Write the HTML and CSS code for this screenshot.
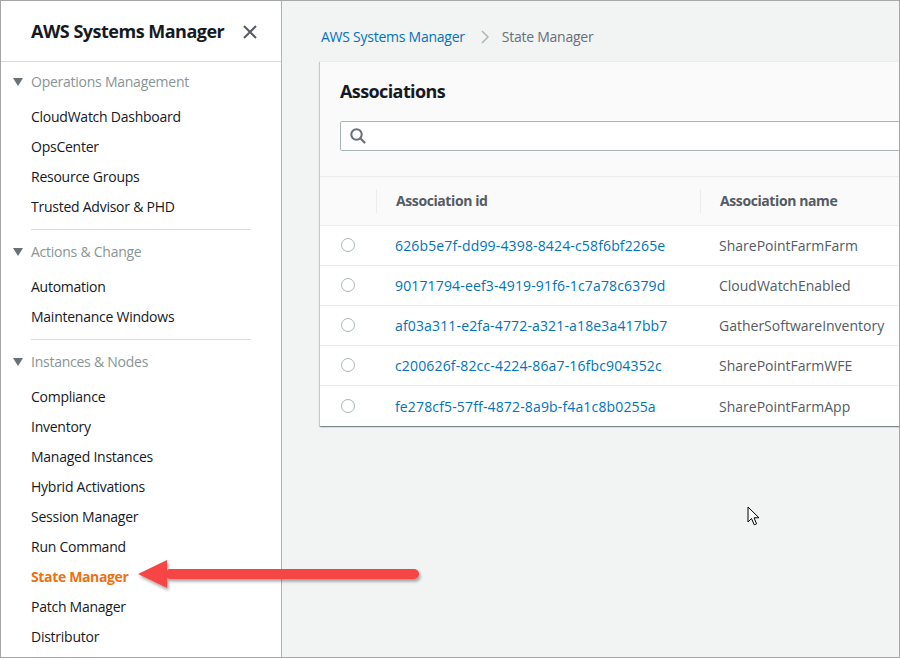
FILE: index.html
```html
<!DOCTYPE html>
<html>
<head>
<meta charset="utf-8">
<link rel="stylesheet" href="styles.css">
</head>
<body>
<div class="frame">
  <aside class="sidebar">
    <div class="side-head">
      <span class="side-title">AWS Systems Manager</span>
      <svg class="close" width="14" height="14" viewBox="0 0 14 14"><path d="M1 1L13 13M13 1L1 13" stroke="#545b64" stroke-width="2" fill="none"/></svg>
    </div>
    <nav class="nav">
      <div class="sec-head"><span class="tri"></span>Operations Management</div>
      <ul class="items">
        <li>CloudWatch Dashboard</li>
        <li>OpsCenter</li>
        <li>Resource Groups</li>
        <li>Trusted Advisor &amp; PHD</li>
      </ul>
      <hr class="divider">
      <div class="sec-head"><span class="tri"></span>Actions &amp; Change</div>
      <ul class="items">
        <li>Automation</li>
        <li>Maintenance Windows</li>
      </ul>
      <hr class="divider">
      <div class="sec-head"><span class="tri"></span>Instances &amp; Nodes</div>
      <ul class="items">
        <li>Compliance</li>
        <li>Inventory</li>
        <li>Managed Instances</li>
        <li>Hybrid Activations</li>
        <li>Session Manager</li>
        <li>Run Command</li>
        <li class="active">State Manager</li>
        <li>Patch Manager</li>
        <li>Distributor</li>
      </ul>
    </nav>
  </aside>
  <main class="main">
    <div class="crumbs">
      <span class="crumb-link">AWS Systems Manager</span>
      <svg class="chev" width="8" height="14" viewBox="0 0 8 14"><path d="M1 1L7 7L1 13" stroke="#aab7b8" stroke-width="1.5" fill="none"/></svg>
      <span class="crumb-cur">State Manager</span>
    </div>
    <section class="card">
      <div class="card-head">
        <h2 class="card-title">Associations</h2>
        <div class="search">
          <svg width="18" height="18" viewBox="0 0 18 18"><circle cx="7.5" cy="7.5" r="5.2" stroke="#687078" stroke-width="2" fill="none"/><path d="M11.3 11.3L15.5 15.5" stroke="#687078" stroke-width="2.2" stroke-linecap="round"/></svg>
        </div>
      </div>
      <div class="tbl">
        <div class="row head">
          <div class="c-sel"></div>
          <div class="c-id"><span class="th-in">Association id</span></div>
          <div class="c-name"><span class="th-in">Association name</span></div>
        </div>
        <div class="row"><div class="c-sel"><span class="radio"></span></div><div class="c-id"><a>626b5e7f-dd99-4398-8424-c58f6bf2265e</a></div><div class="c-name">SharePointFarmFarm</div></div>
        <div class="row"><div class="c-sel"><span class="radio"></span></div><div class="c-id"><a>90171794-eef3-4919-91f6-1c7a78c6379d</a></div><div class="c-name">CloudWatchEnabled</div></div>
        <div class="row"><div class="c-sel"><span class="radio"></span></div><div class="c-id"><a>af03a311-e2fa-4772-a321-a18e3a417bb7</a></div><div class="c-name">GatherSoftwareInventory</div></div>
        <div class="row"><div class="c-sel"><span class="radio"></span></div><div class="c-id"><a>c200626f-82cc-4224-86a7-16fbc904352c</a></div><div class="c-name">SharePointFarmWFE</div></div>
        <div class="row last"><div class="c-sel"><span class="radio"></span></div><div class="c-id"><a>fe278cf5-57ff-4872-8a9b-f4a1c8b0255a</a></div><div class="c-name">SharePointFarmApp</div></div>
      </div>
    </section>
  </main>
  <svg class="arrow" width="300" height="44" viewBox="0 0 300 44">
    <defs>
      <filter id="sh" x="-10%" y="-40%" width="120%" height="200%">
        <feDropShadow dx="1.5" dy="2.5" stdDeviation="1.8" flood-color="#000" flood-opacity="0.35"/>
      </filter>
    </defs>
    <g filter="url(#sh)" fill="#f64545">
      <path d="M6 22L35 8L35 36Z"/>
      <rect x="33" y="17" width="254" height="10" rx="5"/>
    </g>
  </svg>
  <svg class="cursor" width="14" height="22" viewBox="0 0 14 22">
    <path d="M1 1L1 16L4.5 12.5L7.2 18.8L9.6 17.8L7 11.8L12 11.8Z" fill="#fff" stroke="#000" stroke-width="1"/>
  </svg>
</div>
</body>
</html>
```

FILE: styles.css
```css
* { box-sizing: border-box; }
html, body { margin: 0; padding: 0; }
body {
  font-family: "Open Sans", "Noto Sans", Arial, sans-serif;
  font-size: 14px;
  color: #16191f;
  background: #fff;
}
.frame {
  position: relative;
  width: 900px;
  height: 658px;
  border: 1px solid #a7a7a7;
  display: flex;
  overflow: hidden;
}
.sidebar {
  width: 281px;
  flex: none;
  background: #fff;
  border-right: 1px solid #aab7b8;
  letter-spacing: -0.25px;
}
.side-head {
  height: 61px;
  border-bottom: 1px solid #d5dbdb;
  display: flex;
  align-items: center;
  justify-content: space-between;
  padding: 0 24px 0 30px;
}
.side-title {
  font-size: 18px;
  font-weight: 700;
  letter-spacing: -0.5px;
}
.close { display: block; margin-top: 1px; }
.nav { padding-top: 5px; }
.sec-head {
  height: 30px;
  line-height: 30px;
  color: #879596;
  padding-left: 30px;
  position: relative;
  margin-bottom: 5px;
}
.tri {
  position: absolute;
  left: 12px;
  top: 11px;
  width: 0;
  height: 0;
  border-left: 5px solid transparent;
  border-right: 5px solid transparent;
  border-top: 8px solid #687078;
}
.items { list-style: none; margin: 0; padding: 0; }
.items li {
  height: 30px;
  line-height: 30px;
  padding-left: 30px;
  color: #16191f;
}
.items li.active { color: #ec7211; font-weight: 700; letter-spacing: -0.35px; }
.divider {
  border: 0;
  border-top: 1px solid #d5dbdb;
  margin: 7px 0 7px 30px;
  width: 220px;
}
.main {
  flex: 1;
  min-width: 0;
  background: #f2f3f3;
  padding: 0 0 0 38px;
  overflow: hidden;
}
.crumbs {
  height: 60px;
  display: flex;
  align-items: flex-start;
  padding: 26px 0 0 1px;
  line-height: 20px;
  letter-spacing: -0.25px;
}
.crumb-link { color: #0073bb; }
.chev { margin: 3px 13px 0 16px; }
.crumb-cur { color: #687078; }
.card {
  width: 760px;
  background: #fff;
  border-top: 1px solid #eaeded;
  box-shadow: 0 1px 1px 0 rgba(0,28,36,0.3), 1px 1px 1px 0 rgba(0,28,36,0.15), -1px 1px 1px 0 rgba(0,28,36,0.15);
}
.card-head {
  background: #fafafa;
  padding: 17px 20px 25px 20px;
  border-bottom: 1px solid #eaeded;
}
.card-title {
  margin: 0 0 18px 0;
  font-size: 18px;
  font-weight: 700;
  line-height: 24px;
  height: 24px;
  letter-spacing: -0.6px;
}
.search {
  height: 30px;
  background: #fff;
  border: 1px solid #aab7b8;
  border-radius: 2px;
  display: flex;
  align-items: center;
  padding-left: 8px;
}
.search svg { display: block; }
.row {
  display: flex;
  align-items: center;
  height: 40px;
  border-bottom: 1px solid #eaeded;
  color: #545b64;
}
.row.last { border-bottom: 0; }
.row.head {
  height: 49px;
  background: #fafafa;
  font-weight: 700;
  letter-spacing: -0.4px;
}
.c-sel { width: 56px; flex: none; padding-left: 21px; }
.c-id { width: 324px; flex: none; padding-left: 19px; }
.c-name { flex: 1; padding-left: 19px; }
.row.head .c-id, .row.head .c-name { padding-left: 0; }
.th-in {
  display: block;
  border-left: 1px solid #eaeded;
  padding-left: 19px;
  line-height: 24px;
}
.c-id a { color: #0073bb; letter-spacing: 0.15px; }
.radio {
  display: block;
  width: 14px;
  height: 14px;
  border: 1px solid #aab7b8;
  border-radius: 50%;
  margin-top: -1px;
}
.arrow {
  position: absolute;
  left: 131px;
  top: 551px;
}
.cursor {
  position: absolute;
  left: 746px;
  top: 505px;
}
```
